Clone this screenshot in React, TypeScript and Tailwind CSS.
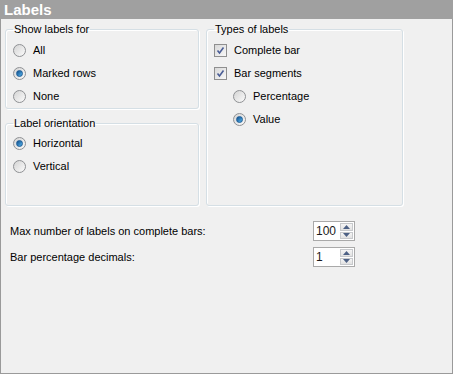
import React from "react";

function Radio({ checked }: { checked?: boolean }) {
  return (
    <span className="w-[13px] h-[13px] rounded-full border border-[#8f9194] bg-gradient-to-br from-[#d4d4d4] to-[#fbfbfb] flex items-center justify-center shrink-0">
      {checked && (
        <span className="w-[7px] h-[7px] rounded-full bg-gradient-to-br from-[#0f4f8c] to-[#57b6ee] border border-[#1c5c96]" />
      )}
    </span>
  );
}

function Check() {
  return (
    <span className="w-[13px] h-[13px] border border-[#8f8f8f] bg-gradient-to-br from-[#d8d8d8] to-[#f8f8f8] flex items-center justify-center shrink-0">
      <svg width="9" height="9" viewBox="0 0 9 9">
        <path d="M1.5 4.5 L3.5 7 L7.5 1.5" fill="none" stroke="#4a5d96" strokeWidth="1.6" />
      </svg>
    </span>
  );
}

function Option({ kind, checked, label }: { kind: "radio" | "check"; checked?: boolean; label: string }) {
  return (
    <div className="h-[23px] flex items-center gap-[7px]">
      {kind === "radio" ? <Radio checked={checked} /> : <Check />}
      <span>{label}</span>
    </div>
  );
}

function Group({ title, className, children }: { title: string; className?: string; children: React.ReactNode }) {
  return (
    <fieldset className={`border border-[#d5dfe5] rounded-[3px] shadow-[inset_1px_1px_0_#fff,1px_1px_0_#fff] px-[7px] ${className ?? ""}`}>
      <legend className="px-[1px] leading-[14px]">{title}</legend>
      {children}
    </fieldset>
  );
}

function Spinner({ value }: { value: string }) {
  return (
    <div className="w-[42px] h-[20px] border border-[#a9a9a9] bg-white flex">
      <span className="flex-1 pl-[2px] leading-[18px] text-[12px] text-[#1a1a1a]">{value}</span>
      <div className="w-[15px] flex flex-col p-[1px] gap-[1px]">
        <div className="flex-1 border border-[#c7c9cc] bg-gradient-to-b from-[#f5f5f5] to-[#e2e2e2] flex items-center justify-center">
          <svg width="7" height="4" viewBox="0 0 7 4">
            <path d="M0 4 L3.5 0 L7 4 Z" fill="#4d6185" />
          </svg>
        </div>
        <div className="flex-1 border border-[#c7c9cc] bg-gradient-to-b from-[#f5f5f5] to-[#e2e2e2] flex items-center justify-center">
          <svg width="7" height="4" viewBox="0 0 7 4">
            <path d="M0 0 L7 0 L3.5 4 Z" fill="#4d6185" />
          </svg>
        </div>
      </div>
    </div>
  );
}

export default function App() {
  return (
    <div className="w-[453px] h-[374px] bg-[#f0f0f0] border-x border-b border-[#9a9a9a] flex flex-col text-[11px] text-black font-['Liberation_Sans',Arial,sans-serif]">
      <div className="h-[19px] bg-[#a0a0a0] text-white font-bold text-[15px] leading-[19px] pl-[4px] -mx-px">
        Labels
      </div>
      <div className="pl-[4px] pt-[3px] flex gap-[7px]">
        <div className="w-[194px] flex flex-col gap-[7px]">
          <Group title="Show labels for" className="h-[87px] pt-[3px]">
            <Option kind="radio" label="All" />
            <Option kind="radio" checked label="Marked rows" />
            <Option kind="radio" label="None" />
          </Group>
          <Group title="Label orientation" className="h-[90px] pt-[2px]">
            <Option kind="radio" checked label="Horizontal" />
            <Option kind="radio" label="Vertical" />
          </Group>
        </div>
        <Group title="Types of labels" className="w-[197px] h-[184px] pt-[3px]">
          <Option kind="check" label="Complete bar" />
          <Option kind="check" label="Bar segments" />
          <div className="pl-[19px]">
            <Option kind="radio" label="Percentage" />
            <div className="h-[22px] flex items-center gap-[7px]">
              <Radio checked />
              <span>Value</span>
            </div>
          </div>
        </Group>
      </div>
      <div className="pl-[9px] pt-[15px] flex flex-col gap-[6px]">
        <div className="flex items-center">
          <span className="w-[303px]">Max number of labels on complete bars:</span>
          <Spinner value="100" />
        </div>
        <div className="flex items-center">
          <span className="w-[303px]">Bar percentage decimals:</span>
          <Spinner value="1" />
        </div>
      </div>
    </div>
  );
}
